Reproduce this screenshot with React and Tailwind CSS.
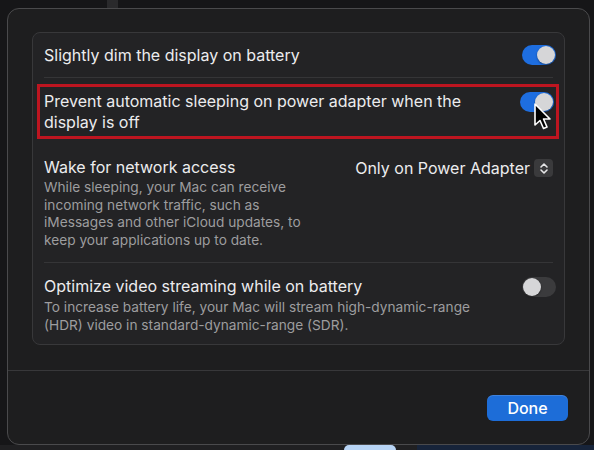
import React from 'react';

const Toggle = ({ on }) => (
  <div
    className={
      'relative -mr-[3px] h-[20px] w-[34px] shrink-0 rounded-full ' +
      (on ? 'bg-[#1e6ee0]' : 'bg-[#3b3b3d]')
    }
  >
    <div
      className={
        'absolute top-[1px] h-[18px] w-[18px] rounded-full bg-[#d6d6d8] shadow-[0_1px_2px_rgba(0,0,0,0.4)] ' +
        (on ? 'right-[1px]' : 'left-[1px]')
      }
    />
  </div>
);

const Cursor = () => (
  <svg
    className="absolute left-[530px] top-[101px]"
    width="22"
    height="30"
    viewBox="0 0 22 30"
  >
    <path
      d="M5 3 L5 24 L10 19.5 L13.5 27.5 L17 26 L13.5 18 L20 18 Z"
      fill="#000"
      stroke="#fff"
      strokeWidth="1.6"
      strokeLinejoin="round"
    />
  </svg>
);

const Separator = () => <div className="mx-[11px] h-px bg-[#353537]" />;

export default function App() {
  return (
    <div
      className="relative flex h-[450px] w-[594px] flex-col overflow-hidden bg-[#161618]"
      style={{ fontFamily: 'Inter, "Noto Sans", sans-serif' }}
    >
      {/* underlying window bits */}
      <div className="flex h-[8px] shrink-0">
        <div className="ml-[107px] w-[11px] bg-[#2a2a2c]" />
      </div>

      <div className="ml-[7px] flex h-[437px] w-[583px] shrink-0 flex-col rounded-[12px] border border-[#4a4a4c] bg-[#1e1e1f]">
        <div className="px-[24px] pt-[23px]">
          <div className="relative rounded-[8px] border border-[#38383a] bg-[#232325] text-[16px] leading-[20px] text-[#ececee]">
            {/* Row 1 */}
            <div className="flex items-center justify-between px-[11px] py-[12px]">
              <span>Slightly dim the display on battery</span>
              <Toggle on />
            </div>
            <Separator />

            {/* Row 2 (highlighted) */}
            <div className="pb-[6px] pl-[4px] pr-[5px] pt-[6px]">
              <div className="flex items-start justify-between border-[3px] border-[#bd1520] pb-[3px] pl-[4px] pr-[5px] pt-[4px]">
                <span className="w-[470px] leading-[21px]">
                  Prevent automatic sleeping on power adapter when the display is off
                </span>
                <div className="pt-[1px]">
                  <Toggle on />
                </div>
              </div>
            </div>

            {/* Row 3 */}
            <div className="flex items-start justify-between px-[11px] pb-[13px] pt-[12px]">
              <div>
                <div>Wake for network access</div>
                <div className="mt-[2px] w-[280px] text-[13.7px] leading-[17.5px] text-[#9d9d9f]">
                  While sleeping, your Mac can receive incoming network traffic, such as iMessages and other iCloud updates, to keep your applications up to date.
                </div>
              </div>
              <div className="flex items-center gap-[4px] pt-[1px]">
                <span>Only on Power Adapter</span>
                <div className="flex h-[18px] w-[19px] items-center justify-center rounded-[4px] bg-[#3a3a3c]">
                  <svg width="10" height="13" viewBox="0 0 10 13" fill="none">
                    <path d="M2 5 L5 2 L8 5" stroke="#e5e5e7" strokeWidth="1.6" strokeLinecap="round" strokeLinejoin="round" />
                    <path d="M2 8 L5 11 L8 8" stroke="#e5e5e7" strokeWidth="1.6" strokeLinecap="round" strokeLinejoin="round" />
                  </svg>
                </div>
              </div>
            </div>
            <Separator />

            {/* Row 4 */}
            <div className="flex items-start justify-between px-[11px] pb-[10px] pt-[13px]">
              <div>
                <div>Optimize video streaming while on battery</div>
                <div className="mt-[2px] w-[450px] text-[13.7px] leading-[18px] text-[#9d9d9f]">
                  To increase battery life, your Mac will stream high-dynamic-range (HDR) video in standard-dynamic-range (SDR).
                </div>
              </div>
              <div className="pt-[1px]">
                <Toggle />
              </div>
            </div>
          </div>
        </div>

        <div className="mt-[25px] h-px bg-[#38383a]" />

        <div className="flex flex-1 items-center justify-end pr-[21px]">
          <button className="h-[26px] w-[81px] rounded-[6px] bg-[#1d6dd8] text-[16px] font-medium text-white shadow-[inset_0_1px_0_rgba(255,255,255,0.15)]">
            Done
          </button>
        </div>
      </div>

      {/* underlying window bottom */}
      <div className="flex h-[5px] shrink-0">
        <div className="w-[417px] bg-[#202022] pl-[344px]">
          <div className="h-full w-[52px] rounded-t-[6px] bg-[#b8d4f5]" />
        </div>
        <div className="flex-1 bg-[#17243a]" />
      </div>

      <Cursor />
    </div>
  );
}
